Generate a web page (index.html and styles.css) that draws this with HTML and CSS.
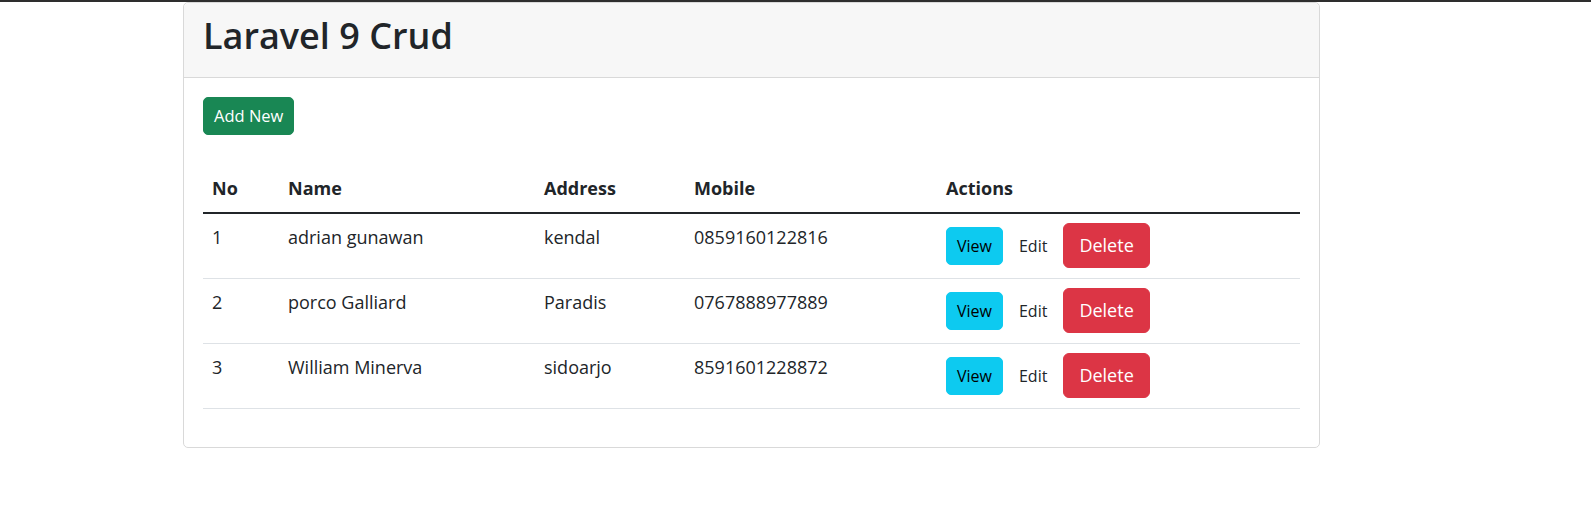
FILE: index.html
```html
<!DOCTYPE html>
<html lang="en">
<head>
<meta charset="utf-8">
<title>Laravel 9 Crud</title>
<link rel="stylesheet" href="styles.css">
</head>
<body>
<div class="topline"></div>
<div class="page">
  <div class="card">
    <div class="card-header">
      <h1 class="title">Laravel 9 Crud</h1>
    </div>
    <div class="card-body">
      <div class="toolbar">
        <a class="btn btn-success">Add New</a>
      </div>
      <table class="table">
        <colgroup>
          <col class="c-no">
          <col class="c-name">
          <col class="c-addr">
          <col class="c-mobile">
          <col class="c-actions">
        </colgroup>
        <thead>
          <tr>
            <th>No</th>
            <th>Name</th>
            <th>Address</th>
            <th>Mobile</th>
            <th>Actions</th>
          </tr>
        </thead>
        <tbody>
          <tr>
            <td>1</td>
            <td>adrian gunawan</td>
            <td>kendal</td>
            <td>0859160122816</td>
            <td class="actions">
              <div class="action-group">
                <a class="btn btn-info">View</a>
                <a class="btn btn-plain">Edit</a>
                <button class="btn btn-danger btn-lg">Delete</button>
              </div>
            </td>
          </tr>
          <tr>
            <td>2</td>
            <td>porco Galliard</td>
            <td>Paradis</td>
            <td>0767888977889</td>
            <td class="actions">
              <div class="action-group">
                <a class="btn btn-info">View</a>
                <a class="btn btn-plain">Edit</a>
                <button class="btn btn-danger btn-lg">Delete</button>
              </div>
            </td>
          </tr>
          <tr>
            <td>3</td>
            <td>William Minerva</td>
            <td>sidoarjo</td>
            <td>8591601228872</td>
            <td class="actions">
              <div class="action-group">
                <a class="btn btn-info">View</a>
                <a class="btn btn-plain">Edit</a>
                <button class="btn btn-danger btn-lg">Delete</button>
              </div>
            </td>
          </tr>
        </tbody>
      </table>
    </div>
  </div>
</div>
</body>
</html>
```

FILE: styles.css
```css
* { box-sizing: border-box; }

html, body {
  margin: 0;
  padding: 0;
  background: #fff;
}

body {
  font-family: "Open Sans", "Noto Sans", "Liberation Sans", sans-serif;
  color: #212529;
  font-size: 16px;
  line-height: 1.5;
}

.topline {
  height: 2px;
  background: #2e2e2e;
}

.page {
  padding-left: 183px;
}

.card {
  width: 1137px;
  border: 1px solid #d9d9d9;
  border-radius: 5px;
  background: #fff;
}

.card-header {
  height: 75px;
  padding: 11px 19px 19px;
  background: #f7f7f7;
  border-bottom: 1px solid #d9d9d9;
  border-radius: 5px 5px 0 0;
}

.title {
  margin: 0;
  font-size: 36px;
  line-height: 44px;
  font-weight: 600;
  color: #212529;
}

.card-body {
  padding: 19px;
}

.toolbar {
  display: flex;
}

.btn {
  display: inline-block;
  font-family: inherit;
  font-size: 16px;
  line-height: 24px;
  padding: 6px 12px;
  border: 1px solid transparent;
  border-radius: 5px;
  text-decoration: none;
  cursor: pointer;
  background: transparent;
  color: #212529;
}

.btn-success {
  background: #198754;
  border-color: #198754;
  color: #fff;
  padding: 6px 10px;
  font-size: 16.5px;
}

.btn-info {
  background: #0dcaf0;
  border-color: #0dcaf0;
  color: #000;
  padding: 6px 10px;
}

.btn-plain {
  padding: 6px 11px;
}

.btn-danger {
  background: #dc3545;
  border-color: #dc3545;
  color: #fff;
}

.btn-lg {
  font-size: 18px;
  line-height: 27px;
  padding: 8px 15px;
  border-radius: 6px;
}

.table {
  width: 100%;
  margin-top: 31px;
  margin-bottom: 19px;
  border-collapse: collapse;
  table-layout: fixed;
  font-size: 18px;
  line-height: 27px;
}

.c-no { width: 76px; }
.c-name { width: 256px; }
.c-addr { width: 150px; }
.c-mobile { width: 252px; }
.c-actions { width: 363px; }

.table th {
  text-align: left;
  font-weight: 700;
  padding: 9px 9px 10px;
  vertical-align: bottom;
  border-bottom: 2px solid #212529;
}

.table td {
  padding: 10px 9px 0;
  vertical-align: top;
  border-bottom: 1px solid #dee2e6;
}

.table td.actions {
  padding: 9px 9px 10px;
}

.action-group {
  display: flex;
  align-items: baseline;
  gap: 4px;
}
```
